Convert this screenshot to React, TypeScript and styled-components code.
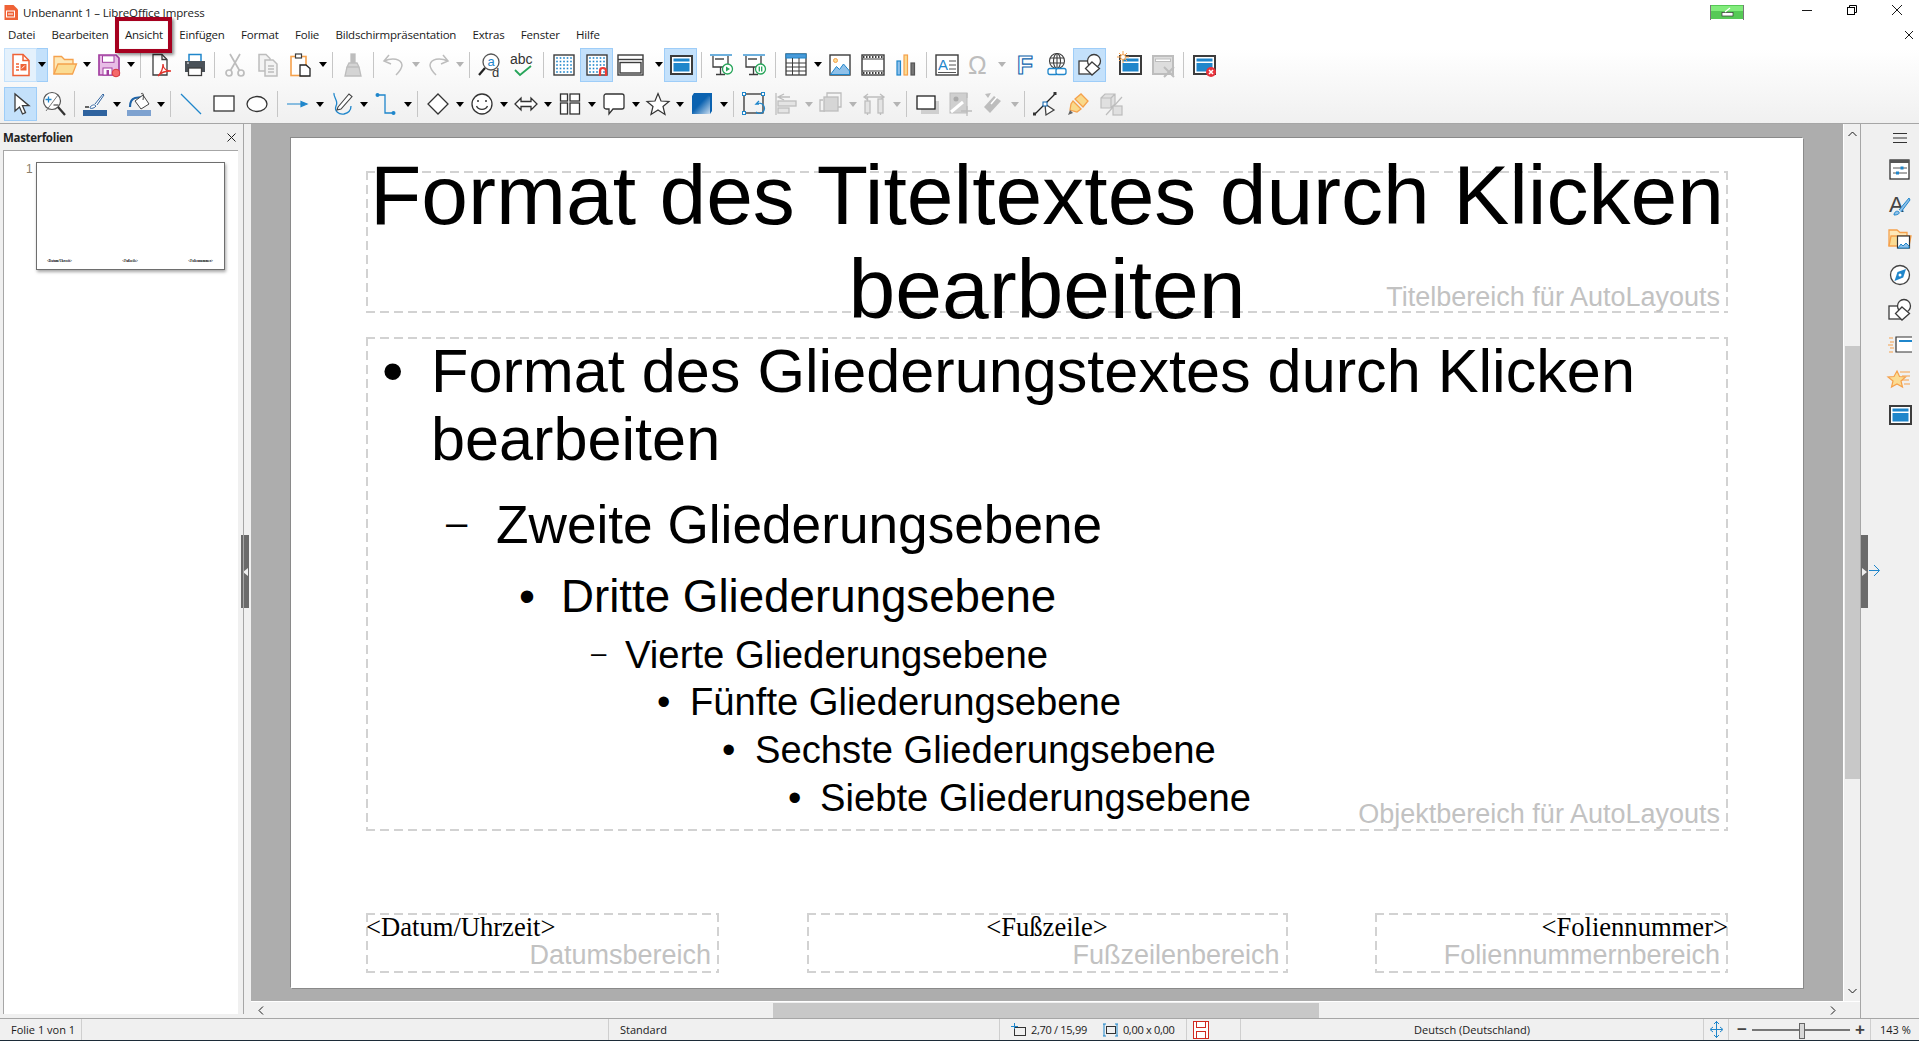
import React from 'react';
import styled, { createGlobalStyle, css } from 'styled-components';

const DARK = '#3c3c3c';
const GRAY = '#bdbdbd';
const BLUE = '#1f86cb';
const ORANGE = '#f5a14c';
const UI_FONT = '"Open Sans", "Noto Sans", sans-serif';

const GlobalStyle = createGlobalStyle`
  html, body { margin: 0; padding: 0; height: 100%; overflow: hidden; background: #f0f0f0; }
  #root { height: 100%; }
  * { box-sizing: border-box; }
`;

const Window = styled.div`
  width: 1919px;
  height: 1041px;
  display: flex;
  flex-direction: column;
  overflow: hidden;
  font-family: ${UI_FONT};
  font-size: 11.5px;
  color: #1a1a1a;
`;

const TopArea = styled.header`
  height: 124px;
  flex: none;
  background: linear-gradient(#fff 0, #fff 40%, #f0f0f0 100%);
  border-bottom: 1px solid #a6a6a6;
`;

const TitleBar = styled.div`
  height: 24px;
  display: flex;
  align-items: center;
  padding-left: 3px;
  letter-spacing: -0.15px;
`;

const TitleText = styled.span`
  margin-left: 5px;
  flex: 1;
`;

const WinButton = styled.div`
  width: 45px;
  height: 24px;
  display: flex;
  align-items: center;
  justify-content: center;
  padding-bottom: 4px;
`;

const MenuBar = styled.nav`
  height: 21px;
  display: flex;
  align-items: center;
  letter-spacing: -0.2px;
`;

const MenuItem = styled.span<{ $marked?: boolean }>`
  position: relative;
  padding: 0 8.2px;
  &:first-child { padding-left: 8px; }
  ${(p) =>
    p.$marked &&
    css`
      &::after {
        content: '';
        position: absolute;
        left: -2px;
        right: -1px;
        top: -10px;
        bottom: -11px;
        border: 4px solid #a6001f;
        box-shadow: 2px 2px 3px rgba(0, 0, 0, 0.45), inset 0 0 1px rgba(0, 0, 0, 0.3);
      }
    `}
`;

const DocClose = styled.div`
  margin-left: auto;
  padding-right: 6px;
  display: flex;
`;

const Toolbar = styled.div`
  height: 39px;
  display: flex;
  align-items: center;
  padding-left: 4px;
  & + & { height: 40px; }
`;

const ToolButton = styled.div<{ $state?: string }>`
  width: 33px;
  height: 34px;
  flex: none;
  display: flex;
  align-items: center;
  justify-content: center;
  border: 1px solid transparent;
  ${(p) =>
    p.$state === 'active' &&
    css`
      background: #c4e1fb;
      border-color: #9ecdf8;
    `}
  ${(p) =>
    p.$state === 'soft' &&
    css`
      background: #e4f1fc;
      border-color: #c4e1fb;
    `}
`;

const DropZone = styled.div<{ $active?: boolean }>`
  width: 11px;
  height: 34px;
  flex: none;
  display: flex;
  align-items: center;
  justify-content: center;
  ${(p) =>
    p.$active &&
    css`
      background: #c4e1fb;
      border: 1px solid #9ecdf8;
      border-left: 0;
    `}
`;

const Caret = styled.i<{ $off?: boolean }>`
  display: block;
  border-left: 4px solid transparent;
  border-right: 4px solid transparent;
  border-top: 5px solid ${(p) => (p.$off ? '#b4b4b4' : '#000')};
`;

const Separator = styled.div`
  width: 8px;
  flex: none;
  height: 26px;
  display: flex;
  justify-content: center;
  &::before {
    content: '';
    width: 1px;
    background: #c6c6c6;
  }
`;

const Spacer = styled.div<{ $w: number }>`
  width: ${(p) => p.$w}px;
  flex: none;
`;

const Main = styled.main`
  flex: 1;
  min-height: 0;
  display: flex;
`;

const LeftDeck = styled.aside`
  position: relative;
  width: 251px;
  flex: none;
  background: #f0f0f0;
  padding: 0 8px 4px 3px;
  display: flex;
  flex-direction: column;
  &::after {
    content: '';
    position: absolute;
    left: 243px;
    top: 0;
    bottom: 4px;
    width: 1px;
    background: #a6a6a6;
  }
`;

const DeckHeader = styled.div`
  height: 26px;
  width: 235px;
  display: flex;
  align-items: center;
  justify-content: space-between;
  padding-right: 2px;
  font-weight: 700;
  font-size: 11.5px;
  letter-spacing: -0.3px;
  color: #222;
`;

const PreviewList = styled.div`
  flex: 1;
  width: 235px;
  background: #fff;
  border-top: 1px solid #a6a6a6;
  border-left: 1px solid #a6a6a6;
  padding: 11px 0 0 22px;
  display: flex;
  gap: 3.3px;
  align-items: flex-start;
`;

const PageNumber = styled.span`
  font-family: 'Liberation Sans', sans-serif;
  font-size: 12px;
  color: #8a7f6a;
`;

const Thumbnail = styled.div`
  width: 189px;
  height: 108px;
  background: #fff;
  border: 1px solid #6e6e6e;
  box-shadow: 1px 2px 3px rgba(0, 0, 0, 0.35);
  display: flex;
  align-items: flex-end;
  justify-content: space-between;
  padding: 0 11px 6px 10px;
  font-family: 'Liberation Serif', serif;
  font-size: 3.3px;
  font-weight: 700;
  line-height: 4px;
  color: #000;
`;

const SplitHandle = styled.div<{ $dir: 'left' | 'right' }>`
  position: absolute;
  top: 411px;
  width: 7px;
  height: 73px;
  background: #6a6a6a;
  display: flex;
  align-items: center;
  justify-content: center;
  ${(p) => (p.$dir === 'left' ? 'left: 241px; width: 8px;' : 'left: 0;')}
  &::before {
    content: '';
    border-top: 4px solid transparent;
    border-bottom: 4px solid transparent;
    ${(p) => (p.$dir === 'left' ? 'border-right: 5px solid #eee;' : 'border-left: 5px solid #eee;')}
  }
`;

const Center = styled.div`
  flex: 1;
  min-width: 0;
  display: flex;
  flex-direction: column;
`;

const CenterRow = styled.div`
  flex: 1;
  min-height: 0;
  display: flex;
`;

const Workspace = styled.div`
  flex: 1;
  background: #adadad;
  padding: 14px 40px 14px 40px;
`;

const VScroll = styled.div`
  width: 17px;
  flex: none;
  background: #f0f0f0;
  border-left: 1px solid #fff;
  display: flex;
  flex-direction: column;
  align-items: center;
`;

const ScrollEnd = styled.div<{ $bottom?: boolean }>`
  height: 20px;
  width: 100%;
  flex: none;
  display: flex;
  align-items: center;
  justify-content: center;
  ${(p) => p.$bottom && 'margin-top: auto;'}
`;

const VThumb = styled.div`
  width: 15px;
  height: 433px;
  margin-top: 202px;
  background: #c8c8c8;
`;

const HScroll = styled.div`
  height: 17px;
  flex: none;
  width: 100%;
  padding-right: 17px;
  display: flex;
  align-items: center;
  background: #f0f0f0;
  border-top: 1px solid #fff;
`;

const HEnd = styled.div`
  width: 20px;
  flex: none;
  display: flex;
  justify-content: center;
`;

const HThumb = styled.div`
  width: 546px;
  height: 15px;
  margin-left: 502px;
  margin-right: auto;
  background: #c8c8c8;
`;

const RightDeck = styled.aside`
  position: relative;
  width: 59px;
  flex: none;
  background: #f0f0f0;
  border-left: 1px solid #a6a6a6;
  padding-left: 19px;
  display: flex;
  flex-direction: column;
  align-items: center;
`;

const TabItem = styled.div<{ $menu?: boolean }>`
  height: ${(p) => (p.$menu ? 28 : 35)}px;
  flex: none;
  display: flex;
  align-items: center;
  justify-content: center;
`;

const DeckArrow = styled.svg`
  position: absolute;
  left: 8px;
  top: 440px;
`;

const dashes = css`
  background-image: linear-gradient(90deg, #d2d2d2 9px, transparent 9px),
    linear-gradient(90deg, #d2d2d2 9px, transparent 9px),
    linear-gradient(#d2d2d2 9px, transparent 9px),
    linear-gradient(#d2d2d2 9px, transparent 9px);
  background-size: 14px 2px, 14px 2px, 2px 14px, 2px 14px;
  background-position: 0 0, 0 100%, 0 0, 100% 0;
  background-repeat: repeat-x, repeat-x, repeat-y, repeat-y;
`;

const Slide = styled.section`
  width: 1512px;
  height: 850px;
  background: #fff;
  box-shadow: -1px -1px 0 #8a8a8a, 1px 1px 0 #8a8a8a;
  padding: 33px 75px 15px 75px;
  display: flex;
  flex-direction: column;
  font-family: 'Liberation Sans', Arial, sans-serif;
  color: #000;
`;

const Placeholder = styled.div`
  position: relative;
  ${dashes}
`;

const AreaLabel = styled.span<{ $bottom: number }>`
  position: absolute;
  right: 8px;
  bottom: ${(p) => p.$bottom}px;
  font-family: 'Liberation Sans', Arial, sans-serif;
  font-size: 27px;
  line-height: 28px;
  color: #c2c2c2;
  white-space: nowrap;
`;

const TitleBox = styled(Placeholder)`
  height: 142px;
  display: flex;
  align-items: center;
  justify-content: center;
  text-align: center;
  font-size: 84px;
  line-height: 94px;
`;

const TitleLines = styled.div`
  white-space: nowrap;
`;

const OutlineBox = styled(Placeholder)`
  height: 494px;
  margin-top: 24px;
`;

const outlineSizes: Record<number, { size: number; line: number; left: number; marker: number; top: number }> = {
  1: { size: 61.2, line: 68, left: 16, marker: 49, top: 0 },
  2: { size: 53.2, line: 58, left: 80, marker: 50, top: 23 },
  3: { size: 45.7, line: 52, left: 153, marker: 42, top: 17 },
  4: { size: 38.3, line: 44, left: 225, marker: 34, top: 10 },
  5: { size: 38.2, line: 44, left: 291, marker: 33, top: 3 },
  6: { size: 38.2, line: 44, left: 356, marker: 33, top: 4 },
  7: { size: 38.2, line: 44, left: 422, marker: 32, top: 4 },
};

const OutlineRow = styled.div<{ $level: number }>`
  display: flex;
  margin-left: ${(p) => outlineSizes[p.$level].left}px;
  margin-top: ${(p) => outlineSizes[p.$level].top}px;
  font-size: ${(p) => outlineSizes[p.$level].size}px;
  line-height: ${(p) => outlineSizes[p.$level].line}px;
`;

// levels 2 and 4 use a short dash set higher than the text middle
const Marker = styled.span<{ $level: number }>`
  width: ${(p) => outlineSizes[p.$level].marker}px;
  flex: none;
  ${(p) =>
    p.$level === 2 || p.$level === 4
      ? css`
          font-size: ${0.72 * outlineSizes[p.$level].size}px;
          line-height: ${outlineSizes[p.$level].line - 5}px;
        `
      : ''}
`;

const FooterRow = styled.div`
  margin-top: 82px;
  display: flex;
  justify-content: space-between;
`;

const FooterBox = styled(Placeholder)<{ $w: number; $align: string }>`
  width: ${(p) => p.$w}px;
  height: 60px;
  text-align: ${(p) => p.$align};
  font-family: 'Liberation Serif', serif;
  font-size: 26.6px;
  line-height: 28px;
`;

const StatusBar = styled.footer`
  height: 23px;
  flex: none;
  display: flex;
  align-items: center;
  background: #f0f0f0;
  border-top: 1px solid #a6a6a6;
  border-bottom: 1px solid #1c2b38;
  font-size: 11px;
`;

const StatusCell = styled.div<{ $w: number; $center?: boolean; $pad?: number }>`
  width: ${(p) => p.$w}px;
  flex: none;
  height: 100%;
  display: flex;
  align-items: center;
  gap: 5px;
  padding-left: ${(p) => (p.$pad === undefined ? 11 : p.$pad)}px;
  border-right: 1px solid #cfcfcf;
  white-space: nowrap;
  ${(p) => p.$center && 'justify-content: center; padding-left: 0;'}
  &:last-child { border-right: 0; }
`;

const SizeText = styled.span`
  letter-spacing: -0.3px;
`;

const ZoomCell = styled(StatusCell)`
  gap: 0;
`;

const ZoomSlider = styled.div`
  position: relative;
  width: 98px;
  height: 2px;
  margin: 0 5px 0 6px;
  background: #777;
  &::after {
    content: '';
    position: absolute;
    left: 47px;
    top: -6px;
    width: 4px;
    height: 14px;
    background: #d8d8d8;
    border: 1px solid #666;
  }
`;

const ZoomSign = styled.span`
  width: 9px;
  text-align: center;
  font-family: 'Liberation Sans', sans-serif;
  font-size: 17px;
  font-weight: 700;
  line-height: 1;
  color: #444;
`;

const Glyph = styled.svg`
  display: block;
  flex: none;
  overflow: visible;
`;

const dots = [0, 1, 2, 3, 4].flatMap((r) => [0, 1, 2, 3, 4].map((c) => [5 + c * 3.5, 5 + r * 3.5]));

const DotGrid = () => (
  <>
    <rect x="2" y="2" width="20" height="20" fill="#fff" stroke={DARK} strokeWidth="1.4" />
    {dots.map(([x, y]) => (
      <rect key={`${x}-${y}`} x={x - 0.8} y={y - 0.8} width="1.6" height="1.6" fill={BLUE} />
    ))}
  </>
);

const BlueWindow = () => (
  <>
    <rect x="2" y="3" width="21" height="18" fill="#fff" stroke={DARK} strokeWidth="2" />
    <rect x="4.5" y="5.5" width="16" height="3" fill={BLUE} />
    <rect x="4.5" y="10" width="16" height="8.5" fill={BLUE} />
  </>
);

const Screen = () => (
  <>
    <path d="M0 2h22" stroke={BLUE} strokeWidth="1.3" />
    <path d="M3 3v11h15V3" fill="#fff" stroke={DARK} strokeWidth="1.3" />
    <rect x="5" y="5" width="9" height="2" fill="#777" />
    <path d="M10.500 14v7M6 21.500h9" stroke={DARK} strokeWidth="1.3" />
  </>
);

const ShapesGroup = () => (
  <g stroke={DARK} strokeWidth="1.3" fill="#fff">
    <rect x="1" y="8" width="12" height="13" />
    <circle cx="16" cy="8" r="6.500" />
    <path d="M14 9l7.500 6.500L14 22l-6.500-6.500z" />
  </g>
);

const SmallText = ({ x, y, size, fill, children }: any) => (
  <text x={x} y={y} fontSize={size} fill={fill} fontFamily="'Liberation Sans', sans-serif">
    {children}
  </text>
);

const icons: Record<string, React.ReactNode> = {
  newDoc: (
    <>
      <path d="M4 1.500h10l6 6v15H4z" fill="#fff" stroke="#ef6236" strokeWidth="1.5" />
      <path d="M14 1.500v6h6" fill="none" stroke="#ef6236" strokeWidth="1.5" />
      <path d="M7 11h3M7 14h3M7 17h3" stroke="#ef6236" strokeWidth="1.300" />
      <rect x="11.500" y="11" width="6" height="6.500" fill="#ef6236" />
      <path d="M12.800 15.500l3-3" stroke="#fff" strokeWidth="1" />
    </>
  ),
  open: (
    <>
      <path d="M1 21V3.500h7.500l3 3H20v5" fill="#fde8b8" stroke={ORANGE} strokeWidth="1.300" />
      <path d="M1 21l4-10h18.500l-4 10z" fill="#fbdc93" stroke={ORANGE} strokeWidth="1.300" />
    </>
  ),
  save: (
    <>
      <path d="M2 2h17l3 3v17H2z" fill="#e8bde6" stroke="#a23ea0" strokeWidth="1.700" />
      <rect x="5.500" y="2.800" width="11.500" height="6.500" fill="#fff" stroke="#a23ea0" />
      <rect x="6" y="15" width="9" height="7" fill="#fff" stroke="#a23ea0" />
      <rect x="9.500" y="17" width="2.500" height="5" fill="#a23ea0" />
      <circle cx="19" cy="20" r="3.800" fill="#f4696a" stroke="#d8383a" />
    </>
  ),
  pdf: (
    <>
      <path d="M4 1.500h9l5 5V22H4z" fill="#fff" stroke={DARK} strokeWidth="1.300" />
      <path d="M13 1.500v5h5" fill="none" stroke={DARK} strokeWidth="1.300" />
      <path d="M9 23c3-3 5-8 5-12 0 4 3 7 8 7-5 0-10 1-13 5z" fill="none" stroke="#e2342d" strokeWidth="1.300" />
    </>
  ),
  print: (
    <>
      <rect x="7" y="1.500" width="12" height="9" fill="#fff" stroke={BLUE} strokeWidth="1.500" />
      <path d="M3 8h20v11H3z" fill="#4a5158" />
      <rect x="6.500" y="15" width="13" height="7.500" fill="#fff" stroke={DARK} strokeWidth="1.300" />
      <path d="M5 10h2" stroke="#fff" />
    </>
  ),
  cut: (
    <g fill="none" stroke={GRAY} strokeWidth="1.700">
      <circle cx="6" cy="20" r="3" />
      <circle cx="18" cy="20" r="3" />
      <path d="M7.500 17.500L17 1M16.500 17.500L7 1" />
    </g>
  ),
  copy: (
    <g fill="#f3f3f3" stroke={GRAY} strokeWidth="1.500">
      <path d="M3 1.500h7l4 4V18H3z" />
      <path d="M9 7h8l4 4v12H9z" />
      <path d="M12 13h6M12 16h6M12 19h6" fill="none" />
    </g>
  ),
  paste: (
    <>
      <rect x="2" y="3.500" width="15" height="19" fill="#fff" stroke={ORANGE} strokeWidth="1.600" />
      <rect x="6.500" y="1" width="6" height="4" fill="#fff" stroke={DARK} strokeWidth="1.200" />
      <path d="M11 12h6l4 3.500V23H11z" fill="#fff" stroke="#222" strokeWidth="1.300" />
    </>
  ),
  brush: (
    <g fill="#d4d4d4" stroke={GRAY} strokeWidth="1.300">
      <rect x="10" y="1" width="4" height="9" fill={GRAY} />
      <path d="M8 10h8l2 4H6zM6 14h12l2 9H4z" />
    </g>
  ),
  undo: <path d="M7 2L2 8l7 3M2 8c9-4 17-2 18 4 0 4-3 7-6 10" fill="none" stroke={GRAY} strokeWidth="1.500" />,
  redo: <path d="M17 2l5 6-7 3M22 8c-9-4-17-2-18 4 0 4 3 7 6 10" fill="none" stroke={GRAY} strokeWidth="1.500" />,
  find: (
    <>
      <circle cx="13" cy="9" r="8" fill="#fff" stroke="#555" strokeWidth="1.300" />
      <path d="M7 15L1 22" stroke="#222" strokeWidth="2.200" />
      <SmallText x="9.500" y="13" size="13" fill={BLUE}>a</SmallText>
      <SmallText x="14" y="24" size="13" fill="#333">d</SmallText>
    </>
  ),
  spell: (
    <>
      <SmallText x="-1" y="11" size="14" fill="#333">abc</SmallText>
      <path d="M4 17l5 5L20 13" fill="none" stroke="#27a55a" strokeWidth="1.800" />
    </>
  ),
  grid: <DotGrid />,
  snap: (
    <>
      <DotGrid />
      <path d="M15 23v-5a3 3 0 0 1 6 0v5" fill="none" stroke="#ec3b34" strokeWidth="2.200" />
    </>
  ),
  view: (
    <g fill="#fff" stroke={DARK} strokeWidth="1.400">
      <rect x="0" y="2" width="25" height="20" />
      <path d="M0 6.500h25" />
      <rect x="2" y="9.500" width="21" height="10.500" />
    </g>
  ),
  master: <BlueWindow />,
  startA: (
    <>
      <Screen />
      <circle cx="17.500" cy="16" r="5" fill="#fff" stroke="#27a55a" strokeWidth="1.300" />
      <path d="M16 13.500l4 2.500-4 2.500z" fill="#27a55a" />
    </>
  ),
  startB: (
    <>
      <Screen />
      <circle cx="17.500" cy="16" r="5" fill="#fff" stroke="#27a55a" strokeWidth="1.300" />
      <path d="M16.300 13.500v5M18.700 13.500v5" stroke="#27a55a" strokeWidth="1.300" />
    </>
  ),
  table: (
    <>
      <rect x="2" y="1" width="20" height="21" fill="#fff" stroke={DARK} strokeWidth="1.300" />
      <rect x="2" y="1" width="20" height="4" fill="#4a9ad8" stroke={BLUE} />
      <path d="M2 10h20M2 14h20M2 18h20M8.500 5v17M15 5v17" stroke={DARK} strokeWidth="1" />
    </>
  ),
  image: (
    <>
      <rect x="2" y="2" width="20" height="20" fill="#fff" stroke={DARK} strokeWidth="1.400" />
      <circle cx="7.500" cy="7.500" r="2" fill="#fbdc93" stroke={ORANGE} />
      <path d="M2.500 21.500l6-8 3 3 4-5.500 6 7v3.500z" fill="#8fc1ea" stroke={BLUE} />
    </>
  ),
  film: (
    <>
      <rect x="1" y="2" width="22" height="20" fill="#fff" stroke={DARK} strokeWidth="1.400" />
      <path d="M1 6h22M1 18h22" stroke={DARK} />
      <path d="M2 4h20M2 20h20" stroke={DARK} strokeWidth="2" strokeDasharray="1.500 1.500" />
    </>
  ),
  chart: (
    <>
      <rect x="3" y="8" width="3.500" height="14" fill="#8fc1ea" stroke={BLUE} strokeWidth="1.200" />
      <rect x="10" y="2" width="3.500" height="20" fill="#fbdc93" stroke={ORANGE} strokeWidth="1.200" />
      <rect x="17" y="10" width="3.500" height="12" fill="#777" stroke="#555" strokeWidth="1.200" />
    </>
  ),
  textbox: (
    <>
      <rect x="1" y="2" width="22" height="20" fill="#fff" stroke={DARK} strokeWidth="1.400" />
      <SmallText x="3" y="17" size="15" fill={BLUE}>A</SmallText>
      <path d="M14 8h7M14 12h7M14 16h7M3 19.500h18" stroke="#555" />
    </>
  ),
  omega: <SmallText x="0" y="21" size="25" fill={GRAY}>Ω</SmallText>,
  fontwork: (
    <text
      x="5"
      y="21"
      fontSize="26"
      fontWeight="700"
      fontFamily="'Liberation Sans', sans-serif"
      fill="#fff"
      stroke="#0b62ad"
      strokeWidth="1.100"
    >
      F
    </text>
  ),
  link: (
    <>
      <g fill="none" stroke={DARK} strokeWidth="1.100">
        <circle cx="12" cy="8" r="7.500" />
        <ellipse cx="12" cy="8" rx="3.500" ry="7.500" />
        <path d="M12 .5v15M5 5h14M5 10h14" />
      </g>
      <g fill="#fff" stroke={BLUE} strokeWidth="1.300">
        <rect x="3" y="15.500" width="10" height="6" rx="2" />
        <rect x="11" y="15.500" width="10" height="6" rx="2" />
      </g>
    </>
  ),
  shapes: <ShapesGroup />,
  newSlide: (
    <>
      <BlueWindow />
      <circle cx="5" cy="4" r="2.500" fill="#fff" stroke={ORANGE} />
      <path
        d="M5 -2v3M5 7v3M-1 4h3M8 4h3M1 0l2 2M7 6l2 2M9 0L7 2M3 6L1 8"
        stroke={ORANGE}
        strokeWidth="1"
      />
    </>
  ),
  delSlide: (
    <>
      <rect x="2" y="3" width="20" height="18" fill="#ddd" stroke={GRAY} strokeWidth="2" />
      <rect x="4.500" y="6" width="15" height="2.500" fill="#fff" stroke={GRAY} />
      <path d="M13 14l10 10M23 14L13 24" stroke={GRAY} strokeWidth="2" />
    </>
  ),
  closeMaster: (
    <>
      <BlueWindow />
      <circle cx="19" cy="19" r="5" fill="#e8333c" />
      <path d="M17 17l4 4M21 17l-4 4" stroke="#fff" strokeWidth="1.500" />
    </>
  ),
  select: <path d="M6 2v17l4.500-4 3 7 3-1.300-3-7H20z" fill="#fff" stroke={DARK} strokeWidth="1.300" />,
  zoomPan: (
    <>
      <circle cx="10" cy="9" r="8.500" fill="#fff" stroke="#555" strokeWidth="1.200" />
      <path d="M4 19L16 3" stroke="#777" />
      <path d="M3.500 7.500h6M6.500 4.500v6" stroke={BLUE} strokeWidth="1.300" />
      <path d="M11.500 13h5" stroke="#555" strokeWidth="1.300" />
      <path d="M16 15l7 8" stroke="#333" strokeWidth="2.200" />
    </>
  ),
  lineColor: (
    <>
      <rect x="0" y="18" width="24" height="6" fill="#2f639f" />
      <path d="M2 15h4" stroke="#333" strokeWidth="1.500" />
      <path d="M8 14c2-1 3-2 5 0-1 2-5 3-6 2 0 0 0-1 1-2zM12 12l8-10 1 1-7 10" fill="#fff" stroke="#2f639f" />
    </>
  ),
  fill: (
    <>
      <rect x="0" y="18" width="24" height="6" fill="#7ea2d0" />
      <path d="M3 15c0-4 1-8 5-9l7-1" fill="none" stroke="#1f64a8" strokeWidth="2.200" />
      <path d="M8 9l8-6 6 9-8 5z" fill="#fff" stroke="#444" />
      <path d="M14 2c2-2 3 0 2 6" fill="none" stroke="#444" />
    </>
  ),
  line: <path d="M2 2l20 20" stroke={BLUE} strokeWidth="1.200" />,
  rect: <rect x="2" y="4" width="20" height="15" fill="#fff" stroke="#333" strokeWidth="1.300" />,
  ellipse: <ellipse cx="12" cy="12" rx="10" ry="7.500" fill="#fff" stroke="#333" strokeWidth="1.300" />,
  arrowLine: <path d="M1 12h15M15 9.500l6 2.500-6 2.500z" fill={BLUE} stroke={BLUE} strokeWidth="1.200" />,
  curve: (
    <>
      <path d="M4 1c-1 4 5 8 2 13-2 5 3 9 8 8 4-1 7-4 7-8" fill="none" stroke={BLUE} strokeWidth="1.300" />
      <path d="M8 15l11-13 3 2.500L11 17l-4 1z" fill="#fff" stroke="#444" strokeWidth="1.100" />
    </>
  ),
  connector: (
    <>
      <path d="M4 3h7v18h8" fill="none" stroke={BLUE} strokeWidth="1.300" />
      <circle cx="3.500" cy="3" r="2" fill={BLUE} />
      <circle cx="19.500" cy="21" r="2" fill={BLUE} />
    </>
  ),
  diamond: <path d="M12 2l10 10-10 10L2 12z" fill="#fff" stroke="#333" strokeWidth="1.300" />,
  smiley: (
    <>
      <circle cx="12" cy="12" r="10" fill="#fff" stroke="#333" strokeWidth="1.300" />
      <circle cx="8" cy="9" r="1" fill="#333" />
      <circle cx="16" cy="9" r="1" fill="#333" />
      <path d="M6.500 14c2 4.500 9 4.500 11 0" fill="none" stroke="#333" strokeWidth="1.300" />
    </>
  ),
  blockArrow: (
    <path d="M1 12l6-6v3.500h10V6l6 6-6 6v-3.500H7V18z" fill="#fff" stroke="#333" strokeWidth="1.300" />
  ),
  flow: (
    <g fill="#fff" stroke="#333" strokeWidth="1.300">
      <rect x="2.500" y="2" width="7" height="7" />
      <rect x="12" y="2" width="9.500" height="7" />
      <rect x="2.500" y="11" width="7" height="11" />
      <rect x="12" y="11" width="9.500" height="11" />
    </g>
  ),
  callout: (
    <path
      d="M4 2h16a2 2 0 0 1 2 2v11a2 2 0 0 1-2 2h-9l-4 5v-5H4a2 2 0 0 1-2-2V4a2 2 0 0 1 2-2z"
      fill="#fff"
      stroke="#333"
      strokeWidth="1.300"
    />
  ),
  star: (
    <path
      d="M12 1.500l3 7.500 8 .5-6 5 2 8-7-4.500L5 22.500l2-8-6-5 8-.5z"
      fill="#fff"
      stroke="#333"
      strokeWidth="1.200"
    />
  ),
  cube3d: (
    <>
      <defs>
        <linearGradient id="cubeFace" x1="0" y1="0" x2="1" y2="1">
          <stop offset="0.45" stopColor="#0b62b0" />
          <stop offset="1" stopColor="#dce9f6" />
        </linearGradient>
      </defs>
      <path d="M4 1h18v18l-2 3H2V4z" fill="url(#cubeFace)" />
      <path d="M17 1h5v18l-2 3V5z" fill="#0b62b0" />
    </>
  ),
  rotate: (
    <>
      <rect x="2" y="2" width="19" height="19" fill="none" stroke="#333" strokeWidth="1.300" />
      <g fill="#fff" stroke={BLUE}>
        <rect x=".5" y=".5" width="3" height="3" />
        <rect x="19.500" y=".5" width="3" height="3" />
        <rect x=".5" y="19.500" width="3" height="3" />
      </g>
      <path d="M17 9l-3 3h3M15 12a5 5 0 1 1 -1 8" fill="none" stroke={BLUE} strokeWidth="1.300" />
    </>
  ),
  align: (
    <g fill="#e4e4e4" stroke={GRAY} strokeWidth="1.300">
      <path d="M1 1v22M9 2L3 5l6 3M3 5h12" fill="none" />
      <rect x="3" y="9" width="18" height="5" />
      <rect x="3" y="16" width="11" height="5" />
    </g>
  ),
  arrange: (
    <g stroke={GRAY} strokeWidth="1.300" fill="none">
      <path d="M8 5V1h14v14h-4" />
      <path d="M6 19H1V8h3" />
      <rect x="5" y="5" width="14" height="14" fill="#d6d6d6" />
    </g>
  ),
  distribute: (
    <g stroke={GRAY} strokeWidth="1.300" fill="#e4e4e4">
      <path d="M1 5h20M5 2L1 5l4 3M17 2l4 3-4 3" fill="none" />
      <rect x="2" y="9" width="5" height="12" />
      <rect x="15" y="7" width="5" height="14" />
      <path d="M4.500 5v4M4.500 21v2M17.500 21v2" fill="none" />
    </g>
  ),
  shadow: (
    <>
      <path d="M6 9h18v13H6z" fill="#cfcfcf" />
      <rect x="2" y="4" width="18" height="13" fill="#fff" stroke="#222" strokeWidth="1.300" />
    </>
  ),
  crop: (
    <>
      <rect x="2" y="1" width="17" height="20" fill="#cfcfcf" stroke={GRAY} />
      <circle cx="8" cy="7" r="2.500" fill="#aaa" />
      <path d="M3 20l12-10" stroke="#fff" strokeWidth="3" />
      <path d="M19 14v10M13 19h11M19 1v5" stroke={GRAY} strokeWidth="1.300" />
    </>
  ),
  filter: (
    <>
      <path d="M3 15L13 4l7 5-11 12z" fill={GRAY} />
      <path d="M10 12l6-7" stroke="#fff" strokeWidth="1.500" />
      <path d="M4 2l6-1-3 5z" fill={GRAY} />
    </>
  ),
  points: (
    <>
      <path d="M2 22L22 2" stroke="#222" strokeWidth="1.200" />
      <path d="M12 12l9 6-8 5z" fill="#fff" stroke="#444" strokeWidth="1.300" />
      <rect x="0" y="20.500" width="3" height="3" fill="#333" />
      <rect x="20.500" y="0" width="3" height="3" fill="#333" />
      <rect x="10" y="10" width="4" height="4" fill="#fff" stroke="#0b62ad" />
    </>
  ),
  glue: (
    <>
      <path d="M7 9l8 8-4 3-7-2 1-6z" fill="#f9d98b" stroke={ORANGE} strokeWidth="1.300" />
      <path d="M9 7l6-5 7 7-5 6z" fill="#f9d98b" stroke={ORANGE} strokeWidth="1.300" />
      <path d="M4 18l-2 5 5-2z" fill="#666" />
    </>
  ),
  toggle3d: (
    <g stroke={GRAY} strokeWidth="1.200" fill="#e0e0e0">
      <path d="M2 6h10v10H2zM2 6l4-4h10v10l-4 4M12 6l4-4" />
      <path d="M7 23L23 5" fill="none" />
      <rect x="14" y="14" width="9" height="9" />
    </g>
  ),
  hamburger: <path d="M5 7.500h14M5 12h14M5 16.500h14" stroke="#333" strokeWidth="1.100" />,
  properties: (
    <>
      <rect x="2" y="2" width="19" height="19" fill="#fff" stroke="#333" strokeWidth="1.300" />
      <rect x="2" y="2" width="19" height="3" fill="#555" />
      <path d="M5 10h14M5 15h14" stroke="#555" />
      <rect x="12.500" y="8.500" width="3" height="3" fill={BLUE} />
      <rect x="8" y="13.500" width="3" height="3" fill={BLUE} />
    </>
  ),
  styles: (
    <>
      <SmallText x="1" y="19" size="22" fill="#444">A</SmallText>
      <path d="M6 22c0-3 3-5 5-3 1 2-2 3-5 3zM11 17L21 5l1 2-9 12" fill="#8fc1ea" stroke={BLUE} />
    </>
  ),
  gallery: (
    <>
      <path d="M1 18V2h8l3 2.500h7V8" fill="#fde8b8" stroke={ORANGE} strokeWidth="1.300" />
      <path d="M1 18l2-10h20l-2 10z" fill="#fbdc93" stroke={ORANGE} strokeWidth="1.300" />
      <rect x="9.500" y="8" width="12" height="12" fill="#fff" stroke="#333" strokeWidth="1.200" />
      <path d="M10 20l3-4 2 2 3-3 3 3v2z" fill="#8fc1ea" stroke={BLUE} />
    </>
  ),
  navigator: (
    <>
      <circle cx="12" cy="12" r="9.500" fill="#fff" stroke="#444" strokeWidth="1.300" />
      <path d="M18 6l-2.800 8.500L6.500 18l3-9z" fill={BLUE} />
      <circle cx="12" cy="12" r="1.500" fill="#fff" />
    </>
  ),
  transition: (
    <>
      <path d="M24 4H8v15h16" fill="#fff" stroke="#333" strokeWidth="1.200" />
      <rect x="11" y="7" width="13" height="2" fill={BLUE} />
      <path d="M1 5h4M2 9h4M0 12h5M2 15h4M1 19h4" stroke={ORANGE} />
    </>
  ),
  animation: (
    <>
      <path d="M10 12h11M12 4h10M14 8h8M16 16h6" stroke={ORANGE} />
      <path
        d="M9 3l2.500 5.500 6 .5-4.500 4 1.500 6-5.500-3-5.500 3 1.500-6L0 9l6-.5z"
        fill="#fbdc93"
        stroke={ORANGE}
        strokeWidth="1.200"
      />
    </>
  ),
};

const Icon = ({ name }: { name: string }) => (
  <Glyph width="24" height="24" viewBox="0 0 24 24">
    {icons[name]}
  </Glyph>
);

const Tiny = ({ d, w = 16, h = 16, children }: { d?: string; w?: number; h?: number; children?: React.ReactNode }) => (
  <Glyph width={w} height={h} viewBox={`0 0 ${w} ${h}`}>
    {d && <path d={d} fill="none" stroke="currentColor" />}
    {children}
  </Glyph>
);

const row1 = [
  'newDoc:soft', 'v:active', 'open', 'v', 'save', 'v', '|', 'pdf', 'print', '|', 'cut', 'copy', 'paste', 'v', '|',
  'brush', '|', 'undo', 'v-', 'redo', 'v-', '|', 'find', 'spell', '|', 'grid', 'snap:active', 'view', '_7', 'v',
  'master:active', '|', 'startA', 'startB', '|', 'table', 'v', 'image', 'film', 'chart', '|', 'textbox', 'omega',
  'v-', 'fontwork', 'link', 'shapes:active', '_7', 'newSlide', 'delSlide', '|', 'closeMaster',
];

const row2 = [
  'select:active', 'zoomPan', '|', 'lineColor', 'v', 'fill', 'v', '|', 'line', 'rect', 'ellipse', '|', 'arrowLine',
  'v', 'curve', 'v', 'connector', 'v', '|', 'diamond', 'v', 'smiley', 'v', 'blockArrow', 'v', 'flow', 'v', 'callout',
  'v', 'star', 'v', 'cube3d', 'v', '|', 'rotate', 'align', 'v-', 'arrange', 'v-', 'distribute', 'v-', '|', 'shadow',
  'crop', 'filter', 'v-', '|', 'points', 'glue', 'toggle3d',
];

const ToolRow = ({ items }: { items: string[] }) => (
  <Toolbar>
    {items.map((item, i) => {
      if (item === '|') return <Separator key={i} />;
      if (item.startsWith('_')) return <Spacer key={i} $w={Number(item.slice(1))} />;
      if (item === 'v' || item === 'v-' || item === 'v:active')
        return (
          <DropZone key={i} $active={item === 'v:active'}>
            <Caret $off={item === 'v-'} />
          </DropZone>
        );
      const [name, state] = item.split(':');
      return (
        <ToolButton key={i} $state={state}>
          <Icon name={name} />
        </ToolButton>
      );
    })}
  </Toolbar>
);

const menus = ['Datei', 'Bearbeiten', 'Ansicht', 'Einfügen', 'Format', 'Folie', 'Bildschirmpräsentation', 'Extras', 'Fenster', 'Hilfe'];

const outline: [number, string, string][] = [
  [2, '–', 'Zweite Gliederungsebene'],
  [3, '•', 'Dritte Gliederungsebene'],
  [4, '–', 'Vierte Gliederungsebene'],
  [5, '•', 'Fünfte Gliederungsebene'],
  [6, '•', 'Sechste Gliederungsebene'],
  [7, '•', 'Siebte Gliederungsebene'],
];

const deckTabs = ['properties', 'styles', 'gallery', 'navigator', 'shapes', 'transition', 'animation', 'master'];

export default function App() {
  return (
    <Window>
      <GlobalStyle />
      <TopArea>
        <TitleBar>
          <Tiny w={15} h={15}>
            <path d="M1.500 0h9L15 4.500V15H1.500z" fill="#ef6236" />
            <rect x="3.500" y="6" width="8" height="6" fill="none" stroke="#fff" />
            <path d="M5 9h5" stroke="#fff" />
          </Tiny>
          <TitleText>Unbenannt 1 – LibreOffice Impress</TitleText>
          <Tiny w={34} h={15}>
            <rect x="0" y="0" width="34" height="14" fill="#56c956" />
            <rect x="1" y="1" width="32" height="5" fill="#82ec7c" />
            <path d="M.5 0v15M33.500 0v15" stroke="#777" />
            <rect x="12" y="7.500" width="11" height="3.500" fill="#fff" stroke="#333" strokeWidth=".7" />
            <path d="M15 7l5-4" stroke="#fff" strokeWidth="1.200" />
          </Tiny>
          <Spacer $w={40} />
          <WinButton>
            <Tiny w={10} h={10} d="M0 5.500h10" />
          </WinButton>
          <WinButton>
            <Tiny w={10} h={10}>
              <rect x=".5" y="2.500" width="7" height="7" fill="none" stroke="#000" />
              <path d="M2.500 2.500v-2h7v7h-2" fill="none" stroke="#000" />
            </Tiny>
          </WinButton>
          <WinButton>
            <Tiny w={10} h={10} d="M0 0l10 10M10 0L0 10" />
          </WinButton>
        </TitleBar>
        <MenuBar>
          {menus.map((m) => (
            <MenuItem key={m} $marked={m === 'Ansicht'}>
              {m}
            </MenuItem>
          ))}
          <DocClose>
            <Tiny w={8} h={8} d="M0 0l8 8M8 0L0 8" />
          </DocClose>
        </MenuBar>
        <ToolRow items={row1} />
        <ToolRow items={row2} />
      </TopArea>

      <Main>
        <LeftDeck>
          <DeckHeader>
            Masterfolien
            <Tiny w={9} h={9} d="M.5.5l8 8M8.500.5l-8 8" />
          </DeckHeader>
          <PreviewList>
            <PageNumber>1</PageNumber>
            <Thumbnail>
              <span>&lt;Datum/Uhrzeit&gt;</span>
              <span>&lt;Fußzeile&gt;</span>
              <span>&lt;Foliennummer&gt;</span>
            </Thumbnail>
          </PreviewList>
          <SplitHandle $dir="left" />
        </LeftDeck>

        <Center>
          <CenterRow>
            <Workspace>
              <Slide>
                <TitleBox>
                  <TitleLines>
                    Format des Titeltextes durch Klicken
                    <br />
                    bearbeiten
                  </TitleLines>
                  <AreaLabel $bottom={2}>Titelbereich für AutoLayouts</AreaLabel>
                </TitleBox>
                <OutlineBox>
                  <OutlineRow $level={1}>
                    <Marker $level={1}>•</Marker>
                    <span>
                      Format des Gliederungstextes durch Klicken
                      <br />
                      bearbeiten
                    </span>
                  </OutlineRow>
                  {outline.map(([level, mark, text]) => (
                    <OutlineRow key={level} $level={level}>
                      <Marker $level={level}>{mark}</Marker>
                      <span>{text}</span>
                    </OutlineRow>
                  ))}
                  <AreaLabel $bottom={3}>Objektbereich für AutoLayouts</AreaLabel>
                </OutlineBox>
                <FooterRow>
                  <FooterBox $w={353} $align="left">
                    &lt;Datum/Uhrzeit&gt;
                    <AreaLabel $bottom={4}>Datumsbereich</AreaLabel>
                  </FooterBox>
                  <FooterBox $w={481} $align="center">
                    &lt;Fußzeile&gt;
                    <AreaLabel $bottom={4}>Fußzeilenbereich</AreaLabel>
                  </FooterBox>
                  <FooterBox $w={353} $align="right">
                    &lt;Foliennummer&gt;
                    <AreaLabel $bottom={4}>Foliennummernbereich</AreaLabel>
                  </FooterBox>
                </FooterRow>
              </Slide>
            </Workspace>
            <VScroll>
              <ScrollEnd>
                <Tiny w={9} h={6} d="M.5 5l4-4 4 4" />
              </ScrollEnd>
              <VThumb />
              <ScrollEnd $bottom>
                <Tiny w={9} h={6} d="M.5 1l4 4 4-4" />
              </ScrollEnd>
            </VScroll>
          </CenterRow>
          <HScroll>
            <HEnd>
              <Tiny w={6} h={9} d="M5 .5l-4 4 4 4" />
            </HEnd>
            <HThumb />
            <HEnd>
              <Tiny w={6} h={9} d="M1 .5l4 4-4 4" />
            </HEnd>
          </HScroll>
        </Center>

        <RightDeck>
          <TabItem $menu>
            <Icon name="hamburger" />
          </TabItem>
          {deckTabs.map((t) => (
            <TabItem key={t}>
              <Icon name={t} />
            </TabItem>
          ))}
          <SplitHandle $dir="right" />
          <DeckArrow width="11" height="13" viewBox="0 0 11 13">
            <path d="M0 6.500h10M5 1l5.500 5.500L5 12" fill="none" stroke={BLUE} />
          </DeckArrow>
        </RightDeck>
      </Main>

      <StatusBar>
        <StatusCell $w={82}>Folie 1 von 1</StatusCell>
        <StatusCell $w={527} />
        <StatusCell $w={391}>Standard</StatusCell>
        <StatusCell $w={187}>
          <Tiny w={15} h={14}>
            <rect x="3.500" y="4.500" width="11" height="8" fill="none" stroke="#333" />
            <path d="M3.500 0v6M0 3.500h7" stroke={BLUE} />
          </Tiny>
          <SizeText>2,70 / 15,99</SizeText>
          <Spacer $w={6} />
          <Tiny w={15} h={14}>
            <rect x="3.500" y="3.500" width="9" height="7" fill="none" stroke="#333" />
            <path d="M1 1v12M14 1v12M0 1h3M0 13h3M12 1h3M12 13h3" stroke={BLUE} />
          </Tiny>
          <SizeText>0,00 x 0,00</SizeText>
        </StatusCell>
        <StatusCell $w={54} $pad={6}>
          <Tiny w={17} h={18}>
            <rect x=".5" y=".5" width="15" height="17" fill="#fff" stroke="#d0281f" />
            <rect x="3.500" y=".5" width="9" height="6" fill="none" stroke="#d0281f" />
            <rect x="3.500" y="10.500" width="9" height="7" fill="none" stroke="#d0281f" />
          </Tiny>
        </StatusCell>
        <StatusCell $w={463} $center>
          Deutsch (Deutschland)
        </StatusCell>
        <StatusCell $w={25} $center>
          <Tiny w={15} h={17}>
            <path d="M7.500 0v17M2 8.500h11M5 3l2.500-2.500L10 3M5 14l2.500 2.500L10 14M4 6L1 8.500 4 11M11 6l3 2.500L11 11" fill="none" stroke={BLUE} />
          </Tiny>
        </StatusCell>
        <ZoomCell $w={142} $pad={8}>
          <ZoomSign>−</ZoomSign>
          <ZoomSlider />
          <ZoomSign>+</ZoomSign>
        </ZoomCell>
        <StatusCell $w={48} $pad={9}>143 %</StatusCell>
      </StatusBar>
    </Window>
  );
}
